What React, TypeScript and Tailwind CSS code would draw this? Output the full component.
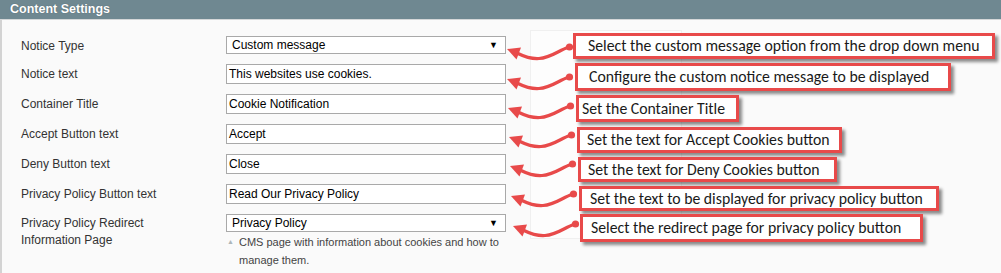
import React from "react";

const rows: { label: string[]; value: string; select?: boolean }[] = [
  { label: ["Notice Type"], value: "Custom message", select: true },
  { label: ["Notice text"], value: "This websites use cookies." },
  { label: ["Container Title"], value: "Cookie Notification" },
  { label: ["Accept Button text"], value: "Accept" },
  { label: ["Deny Button text"], value: "Close" },
  { label: ["Privacy Policy Button text"], value: "Read Our Privacy Policy" },
  { label: ["Privacy Policy Redirect", "Information Page"], value: "Privacy Policy", select: true },
];

const notes = [
  { text: "Select the custom message option from the drop down menu", l: 573, t: 33, w: 422, h: 26, px: 12 },
  { text: "Configure the custom notice message to be displayed", l: 575, t: 63, w: 376, h: 28, px: 11 },
  { text: "Set the Container Title", l: 576, t: 95, w: 163, h: 27, px: 3 },
  { text: "Set the text for Accept Cookies button", l: 577, t: 127, w: 265, h: 26, px: 7 },
  { text: "Set the text for Deny Cookies button", l: 578, t: 157, w: 259, h: 25, px: 7 },
  { text: "Set the text to be displayed for privacy policy button", l: 579, t: 186, w: 360, h: 25, px: 8 },
  { text: "Select the redirect page for privacy policy button", l: 580, t: 214, w: 343, h: 28, px: 8 },
];

const arrows = [
  { x: 569, y: 47 },
  { x: 569, y: 77 },
  { x: 570, y: 106 },
  { x: 571, y: 135 },
  { x: 572, y: 164 },
  { x: 573, y: 194 },
  { x: 575, y: 224 },
];

function Arrow({ x, y }: { x: number; y: number }) {
  return (
    <svg
      className="absolute overflow-visible"
      style={{ left: x - 64, top: y - 6 }}
      width="70"
      height="24"
      viewBox="-2 -6 70 24"
    >
      <path
        d="M62 0 C 52 3, 44 11, 32 11.5 C 24 12, 18 10, 11 6.5"
        fill="none"
        stroke="#e84a4a"
        strokeWidth="3.2"
        strokeLinecap="round"
      />
      <circle cx="62.5" cy="0" r="3.6" fill="#e84a4a" />
      <polygon points="0,2 14,0.5 9.5,12.5" fill="#e84a4a" />
    </svg>
  );
}

export default function App() {
  return (
    <div className="relative w-[1001px] h-[273px] overflow-hidden bg-[#fafafa] font-['Liberation_Sans',Arial,sans-serif]">
      <div className="h-[20px] bg-[#6f8891] border-b border-[#d4d7d8] pl-[10px] flex items-center">
        <span className="text-[12.5px] font-bold text-white [text-shadow:0_0_1px_rgba(0,0,0,0.35)] leading-none">
          Content Settings
        </span>
      </div>
      <div className="h-[253px] border-l-2 border-[#d3d3d3] flex">
        <div className="pl-[19px] pt-[11px] flex flex-col">
          {rows.map((r, i) => (
            <div key={i} className={`flex ${i === 0 ? "h-[28px]" : "h-[30px]"} items-start`}>
              <div
                className={`w-[205px] text-[12px] text-[#333] ${
                  r.label.length > 1 ? "leading-[17px] pt-[6px]" : "leading-[18px] pt-[6px]"
                }`}
              >
                {r.label.map((l) => (
                  <div key={l}>{l}</div>
                ))}
              </div>
              <div className="w-[280px] pt-[5px]">
                {r.select ? (
                  <div className="h-[18px] border border-[#a9a9a9] bg-white flex items-center justify-between pl-[5px] pr-[7px] text-[12px] text-black">
                    <span>{r.value}</span>
                    <span className="text-[9px] leading-none">▼</span>
                  </div>
                ) : (
                  <div className="h-[20px] border border-[#a9a9a9] bg-white flex items-center pl-[2px] text-[12px] text-black">
                    {r.value}
                  </div>
                )}
                {i === rows.length - 1 && (
                  <div className="flex pt-[1px] text-[11px] text-[#444] leading-[18px]">
                    <span className="w-[13px] pl-[1px] text-[7px] text-[#aeb6b9]">▲</span>
                    <span className="w-[267px]">
                      CMS page with information about cookies and how to manage them.
                    </span>
                  </div>
                )}
              </div>
            </div>
          ))}
        </div>
        <div className="ml-[24px] mt-[10px] w-[152px] h-[209px] bg-[#fdfdfd] border border-[#f0f0f0]" />
      </div>

      {arrows.map((a, i) => (
        <Arrow key={i} x={a.x} y={a.y} />
      ))}

      {notes.map((n, i) => (
        <div
          key={i}
          className="absolute border-[3px] border-[#e84a4a] bg-white flex items-center shadow-[3px_3px_3px_rgba(0,0,0,0.45)] text-[15.75px] text-[#1a1a1a] font-['Carlito','Lato',sans-serif] whitespace-nowrap"
          style={{ left: n.l, top: n.t, width: n.w, height: n.h, paddingLeft: n.px }}
        >
          {n.text}
        </div>
      ))}
    </div>
  );
}
